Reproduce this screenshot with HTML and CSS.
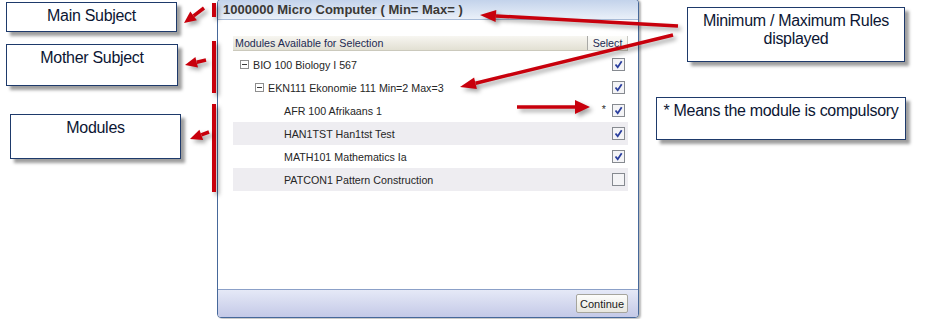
FILE: index.html
```html
<!DOCTYPE html>
<html lang="en">
<head>
    <meta charset="UTF-8">
    <meta name="viewport" content="width=device-width, initial-scale=1.0">
    <title>Module selection</title>

    <link rel="stylesheet" href="styles.css">

</head>
<body>
    <div class="page">

        <div class="notes-left">
            <div class="note note-main">Main Subject</div>
            <div class="note note-mother">Mother Subject</div>
            <div class="note note-modules">Modules</div>
        </div>

        <div class="dialog">
            <div class="dlg-title">1000000 Micro Computer ( Min= Max= )</div>

            <div class="dlg-body">
                <div class="grid-head">
                    <div class="hd-name">Modules Available for Selection</div>
                    <div class="hd-sel">Select</div>
                </div>

                <div class="row first">
                    <div class="name lvl1">
                        <svg class="toggle" width="9" height="9" viewBox="0 0 9 9"><rect x=".5" y=".5" width="8" height="8" fill="#fff" stroke="#8e8e8e"/><path d="M2 4.5h5" stroke="#3a3a3a"/></svg>
                        BIO 100 Biology I 567
                    </div>
                    <div class="sel"><svg class="cb" width="13" height="13" viewBox="0 0 13 13"><rect x=".5" y=".5" width="12" height="12" fill="#f4f4f6" stroke="#868a90"/><path d="M3.5 6.5l2.2 2.8 4-6" fill="none" stroke="#2b3f9e" stroke-width="1.8"/></svg></div>
                </div>

                <div class="row">
                    <div class="name lvl2">
                        <svg class="toggle" width="9" height="9" viewBox="0 0 9 9"><rect x=".5" y=".5" width="8" height="8" fill="#fff" stroke="#8e8e8e"/><path d="M2 4.5h5" stroke="#3a3a3a"/></svg>
                        EKN111 Ekonomie 111 Min=2 Max=3
                    </div>
                    <div class="sel"><svg class="cb" width="13" height="13" viewBox="0 0 13 13"><rect x=".5" y=".5" width="12" height="12" fill="#f4f4f6" stroke="#868a90"/><path d="M3.5 6.5l2.2 2.8 4-6" fill="none" stroke="#2b3f9e" stroke-width="1.8"/></svg></div>
                </div>

                <div class="row">
                    <div class="name leaf">AFR 100 Afrikaans 1</div>
                    <div class="sel"><span class="star">*</span><svg class="cb" width="13" height="13" viewBox="0 0 13 13"><rect x=".5" y=".5" width="12" height="12" fill="#f4f4f6" stroke="#868a90"/><path d="M3.5 6.5l2.2 2.8 4-6" fill="none" stroke="#2b3f9e" stroke-width="1.8"/></svg></div>
                </div>

                <div class="row alt">
                    <div class="name leaf">HAN1TST Han1tst Test</div>
                    <div class="sel"><svg class="cb" width="13" height="13" viewBox="0 0 13 13"><rect x=".5" y=".5" width="12" height="12" fill="#f4f4f6" stroke="#868a90"/><path d="M3.5 6.5l2.2 2.8 4-6" fill="none" stroke="#2b3f9e" stroke-width="1.8"/></svg></div>
                </div>

                <div class="row">
                    <div class="name leaf">MATH101 Mathematics Ia</div>
                    <div class="sel"><svg class="cb" width="13" height="13" viewBox="0 0 13 13"><rect x=".5" y=".5" width="12" height="12" fill="#f4f4f6" stroke="#868a90"/><path d="M3.5 6.5l2.2 2.8 4-6" fill="none" stroke="#2b3f9e" stroke-width="1.8"/></svg></div>
                </div>

                <div class="row alt">
                    <div class="name leaf">PATCON1 Pattern Construction</div>
                    <div class="sel"><svg class="cb" width="13" height="13" viewBox="0 0 13 13"><rect x=".5" y=".5" width="12" height="12" fill="#f4f4f6" stroke="#868a90"/></svg></div>
                </div>
            </div>

            <div class="dlg-foot">
                <button class="btn">Continue</button>
            </div>
        </div>

        <div class="notes-right">
            <div class="note note-rules">Minimum / Maximum Rules<br>displayed</div>
            <div class="note note-star">* Means the module is compulsory</div>
        </div>

        <!-- red markers drawn over the screenshot -->
        <svg class="marks" width="945" height="319" viewBox="0 0 945 319">
            <g class="mark">
                <rect x="212" y="3" width="4" height="14"/>
                <rect x="212" y="41" width="4" height="52"/>
                <rect x="212" y="104" width="4" height="88"/>
            </g>
            <g class="mark">
                <line x1="204" y1="8" x2="193.6" y2="15.8"/>
                <polygon points="184,23 196.9,20.2 190.3,11.4"/>
            </g>
            <g class="mark">
                <line x1="206" y1="60" x2="196.7" y2="62.2"/>
                <polygon points="185,65 198,67.5 195.4,56.9"/>
            </g>
            <g class="mark">
                <line x1="209" y1="132" x2="201.3" y2="134.9"/>
                <polygon points="190,139 203.2,140 199.4,129.7"/>
            </g>
            <g class="mark">
                <line x1="678" y1="26" x2="496" y2="15.9"/>
                <polygon points="480,15 496.3,9.9 495.6,21.9"/>
            </g>
            <g class="mark">
                <line x1="673" y1="35" x2="475.5" y2="83.2"/>
                <polygon points="460,87 476.9,89 474.1,77.4"/>
            </g>
            <g class="mark">
                <line x1="517" y1="107" x2="575" y2="107"/>
                <polygon points="590,107 575,100 575,114"/>
            </g>
        </svg>

    </div>
</body>
</html>
```

FILE: styles.css
```css
body {
    margin: 0;
    background: #ffffff;
    font-family: "Liberation Sans", Arial, sans-serif;
}

.page {
    position: relative;
    display: flex;
    align-items: flex-start;
    width: 945px;
    height: 319px;
    overflow: hidden;
}

/* callout boxes */

.notes-left {
    width: 217px;
    flex: none;
    display: flex;
    flex-direction: column;
    align-items: flex-start;
}

.notes-right {
    flex: 1;
    display: flex;
    flex-direction: column;
    align-items: flex-start;
}

.note {
    box-sizing: border-box;
    border: 1px solid #1e3a6b;
    background: #ffffff;
    box-shadow: 4px 4px 3px #9e9e9e;
    padding-top: 4px;
    font-size: 16px;
    line-height: 18px;
    letter-spacing: -0.3px;
    color: #0c1633;
    text-align: center;
}

.note-main {
    margin: 2px 0 0 6px;
    width: 171px;
    height: 30px;
}

.note-mother {
    margin: 12px 0 0 6px;
    width: 172px;
    height: 42px;
}

.note-modules {
    margin: 28px 0 0 10px;
    width: 171px;
    height: 45px;
}

.note-rules {
    margin: 7px 0 0 48px;
    width: 218px;
    height: 55px;
}

.note-star {
    margin: 35px 0 0 17px;
    width: 250px;
    height: 43px;
}

/* dialog */

.dialog {
    width: 422px;
    height: 319px;
    margin-top: -1px;
    flex: none;
    box-sizing: border-box;
    border: 1px solid #46689a;
    border-radius: 4px;
    display: flex;
    flex-direction: column;
    overflow: hidden;
    background: #ffffff;
    box-shadow: 2px 1px 2px #b8b8b8;
}

.dlg-title {
    height: 19px;
    border-bottom: 1px solid #a9bcd8;
    background: linear-gradient(to bottom, #c3d3eb, #eaf0f9);
    padding-left: 5px;
    font-size: 13px;
    font-weight: bold;
    line-height: 20px;
    color: #3b3935;
    white-space: nowrap;
}

.dlg-body {
    flex: 1;
    padding: 16px 10px 0 15px;
    font-size: 10.7px;
}

.grid-head {
    display: grid;
    grid-template-columns: 1fr 41px;
    height: 14px;
    line-height: 14px;
    background: linear-gradient(to bottom, #f7f6f1, #e2e0d3);
    border-bottom: 1px solid #cbc9bc;
    color: #1d2a52;
}

.hd-name {
    padding-left: 2px;
}

.hd-sel {
    border-left: 1px solid #a9a9a6;
    border-right: 1px solid #c9c9c4;
    text-align: center;
    background: linear-gradient(to bottom, #fbfbf8, #eeede6);
}

.row {
    display: grid;
    grid-template-columns: 1fr 41px;
    height: 23px;
    align-items: center;
}

.row.first {
    margin-top: 2px;
}

.row.alt {
    background: #eeedf1;
}

.name {
    display: flex;
    align-items: center;
    color: #262626;
    white-space: nowrap;
}

.lvl1 {
    padding-left: 7px;
}

.lvl2 {
    padding-left: 22px;
}

.leaf {
    padding-left: 51px;
}

.toggle {
    flex: none;
    margin-right: 4px;
}

.sel {
    display: flex;
    justify-content: flex-end;
    align-items: center;
    gap: 6px;
    padding-right: 3px;
}

.star {
    color: #333333;
    line-height: 13px;
    margin-top: -3px;
}

.cb {
    display: block;
    flex: none;
}

.dlg-foot {
    box-sizing: border-box;
    height: 28px;
    border-top: 1px solid #8ba0c8;
    background: linear-gradient(to bottom, #e5e9f7, #c4c9e7);
    display: flex;
    justify-content: flex-end;
    align-items: flex-start;
    padding: 4px 10px 0 0;
}

.btn {
    width: 52px;
    height: 19px;
    padding: 0;
    border: 1px solid #a6a59d;
    border-radius: 2px;
    background: linear-gradient(to bottom, #fdfdfb, #e8e7df);
    font-family: "Liberation Sans", Arial, sans-serif;
    font-size: 11px;
    color: #1a1a1a;
}

/* red annotation marks */

.marks {
    position: absolute;
    top: 0;
    left: 0;
    pointer-events: none;
}

.mark {
    fill: #c8000c;
    stroke: #c8000c;
    filter: drop-shadow(3px 3px 2px rgba(0, 0, 0, .35));
}

.mark line {
    stroke-width: 3.5;
}

.mark rect,
.mark polygon {
    stroke: none;
}
```
